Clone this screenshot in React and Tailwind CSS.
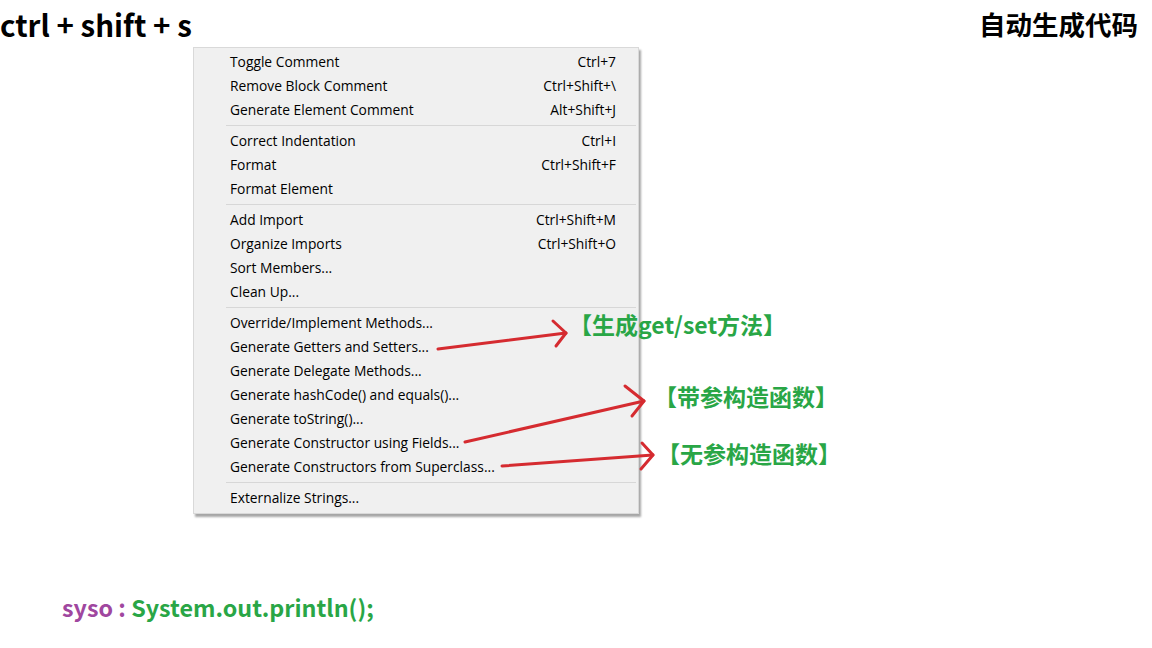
import React from "react";

const groups = [
  [
    ["Toggle Comment", "Ctrl+7"],
    ["Remove Block Comment", "Ctrl+Shift+\\"],
    ["Generate Element Comment", "Alt+Shift+J"],
  ],
  [
    ["Correct Indentation", "Ctrl+I"],
    ["Format", "Ctrl+Shift+F"],
    ["Format Element", ""],
  ],
  [
    ["Add Import", "Ctrl+Shift+M"],
    ["Organize Imports", "Ctrl+Shift+O"],
    ["Sort Members...", ""],
    ["Clean Up...", ""],
  ],
  [
    ["Override/Implement Methods...", ""],
    ["Generate Getters and Setters...", ""],
    ["Generate Delegate Methods...", ""],
    ["Generate hashCode() and equals()...", ""],
    ["Generate toString()...", ""],
    ["Generate Constructor using Fields...", ""],
    ["Generate Constructors from Superclass...", ""],
  ],
  [["Externalize Strings...", ""]],
];

const cjk = { fontFamily: '"Noto Sans CJK SC", "Noto Sans", sans-serif' };

const Arrows = () => (
  <svg className="pointer-events-none absolute left-0 top-0" width="1152" height="648">
    <g stroke="#d52b30" strokeWidth="3" fill="none" strokeLinecap="round" strokeLinejoin="round">
      <path d="M438 349 L566 333" />
      <path d="M553 321 L566 333 L556 346" />
      <path d="M465 442 L644 401" />
      <path d="M625 386 L644 401 L632 416" />
      <path d="M502 466 L653 455" />
      <path d="M642 443 L653 455 L641 469" />
    </g>
  </svg>
);

const App = () => {
  return (
    <div className="relative h-[648px] w-[1152px] overflow-hidden bg-white" style={cjk}>
      <div className="flex items-center justify-between pr-[14px] pt-[5px]">
        <div className="text-[29.5px] font-bold leading-[38px] text-black">ctrl + shift + s</div>
        <div className="text-[26.5px] font-bold leading-[38px] text-black">自动生成代码</div>
      </div>

      <div
        className="ml-[193px] mt-[4px] w-[446px] border border-[#d9d9d9] bg-[#f0f0f0] pb-[3px] pt-[2px] shadow-[2px_3px_2px_rgba(0,0,0,0.35)]"
        style={{ fontFamily: '"Open Sans", "Noto Sans", sans-serif' }}
      >
        {groups.map((group, gi) => (
          <div key={gi}>
            {gi > 0 && (
              <div className="flex h-[7px] items-center pl-[32px] pr-[2px]">
                <div className="h-px w-full bg-[#d7d7d7]" />
              </div>
            )}
            {group.map(([label, key]) => (
              <div
                key={label}
                className="flex h-[24px] items-center justify-between pl-[36px] pr-[22px] text-[13.8px] text-black"
              >
                <span>{label}</span>
                <span>{key}</span>
              </div>
            ))}
          </div>
        ))}
      </div>

      <div className="ml-[62px] mt-[78px] text-[23.3px] font-bold leading-[30px]">
        <span className="text-[#a0479f]">syso : </span>
        <span className="text-[#29a646]">System.out.println();</span>
      </div>

      <Arrows />

      <div className="absolute left-[569px] top-[308px] text-[23px] font-bold leading-[32px] text-[#29a646]">
        【生成get/set方法】
      </div>
      <div className="absolute left-[654px] top-[380px] text-[23px] font-bold leading-[32px] text-[#29a646]">
        【带参构造函数】
      </div>
      <div className="absolute left-[657px] top-[437px] text-[23px] font-bold leading-[32px] text-[#29a646]">
        【无参构造函数】
      </div>
    </div>
  );
};

export default App;
